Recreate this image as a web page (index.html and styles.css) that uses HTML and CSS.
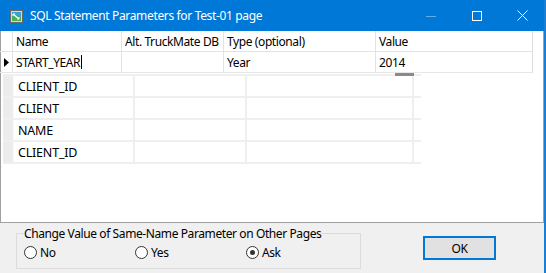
FILE: index.html
```html
<!DOCTYPE html>
<html>
<head>
<meta charset="utf-8">
<link rel="stylesheet" href="styles.css">
</head>
<body>
<div class="window">
  <div class="titlebar">
    <svg class="app-icon" width="13" height="13" viewBox="0 0 13 13">
      <rect x="0.5" y="0.5" width="12" height="12" fill="#d8d8d8" stroke="#6a6a6a"/>
      <rect x="2" y="2" width="9" height="9" fill="#3aa0d8"/>
      <polygon points="2,11 2,7 6,4 11,8 11,11" fill="#4caf50"/>
      <path d="M3 4 L9 9" stroke="#ffffff" stroke-width="1.2"/>
      <path d="M3 4 L3 6 M3 4 L5 4 M9 9 L9 7 M9 9 L7 9" stroke="#ffffff" stroke-width="1"/>
    </svg>
    <span class="title">SQL Statement Parameters for Test-01 page</span>
    <div class="controls">
      <span class="ctl ctl-min"><svg width="10" height="10" viewBox="0 0 10 10"><path d="M0 5.5 H10" stroke="#66aee8" stroke-width="1"/></svg></span>
      <span class="ctl ctl-max"><svg width="10" height="10" viewBox="0 0 10 10"><rect x="0.5" y="0.5" width="9" height="9" fill="none" stroke="#fff" stroke-width="1"/></svg></span>
      <span class="ctl ctl-close"><svg width="11" height="11" viewBox="0 0 11 11"><path d="M0.5 0.5 L10.5 10.5 M10.5 0.5 L0.5 10.5" stroke="#fff" stroke-width="1"/></svg></span>
    </div>
  </div>
  <div class="client">
    <div class="grid-top">
      <div class="cell rh"></div>
      <div class="cell">Name</div>
      <div class="cell">Alt. TruckMate DB</div>
      <div class="cell">Type (optional)</div>
      <div class="cell">Value</div>
      <div class="cell rh"><svg class="arrow" width="5" height="9" viewBox="0 0 5 9"><polygon points="0,0 5,4.5 0,9" fill="#000"/></svg></div>
      <div class="cell">START_YEAR<span class="caret"></span></div>
      <div class="cell"></div>
      <div class="cell">Year</div>
      <div class="cell">2014</div>
    </div>
    <div class="grid-low">
      <div class="lrow">
        <div class="lcell lrh"></div><div class="lcell">CLIENT_ID</div><div class="lcell"></div><div class="lcell"></div><div class="ltail"></div>
        <span class="mark"></span>
      </div>
      <div class="lrow">
        <div class="lcell lrh"></div><div class="lcell">CLIENT</div><div class="lcell"></div><div class="lcell"></div><div class="ltail"></div>
      </div>
      <div class="lrow">
        <div class="lcell lrh"></div><div class="lcell">NAME</div><div class="lcell"></div><div class="lcell"></div><div class="ltail"></div>
      </div>
      <div class="lrow">
        <div class="lcell lrh"></div><div class="lcell">CLIENT_ID</div><div class="lcell"></div><div class="lcell"></div><div class="ltail"></div>
      </div>
      <div class="lend"></div>
    </div>
  </div>
  <div class="footer">
    <fieldset class="group">
      <legend>Change Value of Same-Name Parameter on Other Pages</legend>
      <div class="radios">
        <label class="radio"><span class="circle"></span>No</label>
        <label class="radio"><span class="circle"></span>Yes</label>
        <label class="radio"><span class="circle on"></span>Ask</label>
      </div>
    </fieldset>
    <div class="ok">OK</div>
  </div>
</div>
</body>
</html>
```

FILE: styles.css
```css
* { box-sizing: border-box; }
html, body { margin: 0; padding: 0; }
body {
  width: 546px;
  height: 273px;
  overflow: hidden;
  font-family: "Noto Sans", "Open Sans", sans-serif;
  font-size: 12px;
  letter-spacing: -0.4px;
  color: #000;
  background: #f0f0f0;
}
.window {
  width: 546px;
  height: 273px;
  border-right: 2px solid #1a7fd4;
  background: #f0f0f0;
  display: flex;
  flex-direction: column;
}
.titlebar {
  height: 31px;
  flex: none;
  background: #0078d7;
  color: #fff;
  display: flex;
  align-items: center;
  padding-left: 10px;
  position: relative;
}
.app-icon { margin-top: 1px; }
.title {
  margin-left: 7px;
  font-size: 12px;
  letter-spacing: -0.35px;
}
.controls {
  margin-left: auto;
  display: flex;
  height: 31px;
}
.ctl {
  width: 46px;
  display: flex;
  align-items: center;
  justify-content: center;
}
.ctl-min { width: 46px; }
.ctl-close { width: 44px; }
.client {
  height: 192px;
  flex: none;
  background: #fff;
  border-left: 1px solid #a0a0a0;
  border-right: 1px solid #a0a0a0;
  border-bottom: 1px solid #a0a0a0;
  position: relative;
}
.grid-top {
  display: grid;
  grid-template-columns: 13px 109px 102px 152px 157px;
  grid-template-rows: 21px 20px;
  width: 533px;
  margin-left: -1px;
  border-right: 1px solid #dedede;
  border-bottom: 1px solid #e6e6e6;
}
.cell {
  border-right: 1px solid #e3e3e3;
  border-bottom: 1px solid #e3e3e3;
  padding-left: 3px;
  display: flex;
  align-items: center;
  white-space: nowrap;
  overflow: hidden;
}
.cell:nth-child(5n) { border-right: none; }
.cell:nth-child(n+6) { border-bottom: none; }
.rh { padding-left: 4px; }
.caret {
  display: inline-block;
  width: 1px;
  height: 14px;
  background: #000;
  margin-left: 0.4px;
}
.grid-low {
  margin-top: 1px;
  margin-left: 2px;
  width: 418px;
  position: relative;
}
.lrow {
  display: grid;
  grid-template-columns: 11px 121px 112px 167px 7px;
  height: 22px;
  border-top: 2px solid #efefef;
  position: relative;
}
.lcell {
  border-right: 2px solid #efefef;
  padding-left: 4px;
  display: flex;
  align-items: center;
  font-size: 12.5px;
  letter-spacing: -0.2px;
  white-space: nowrap;
}
.lrh {
  background: #ececec;
  border-right: 1px solid #fafafa;
  padding: 0;
}
.lend { height: 2px; background: #efefef; }
.mark {
  position: absolute;
  left: 392px;
  top: -3px;
  width: 19px;
  height: 3px;
  background: #8a8a8a;
}
.footer {
  flex: 1;
  display: flex;
  align-items: flex-start;
  padding: 4px 0 0 16px;
}
.group {
  margin: 0;
  width: 345px;
  height: 42px;
  border: 1px solid #dcdcdc;
  padding: 0 0 0 7px;
}
.group legend {
  padding: 0;
  margin-left: 0;
  font-size: 12px;
  line-height: 13px;
}
.radios {
  display: flex;
  margin-top: 4px;
}
.radio {
  display: flex;
  align-items: center;
  width: 111px;
  font-size: 12px;
}
.circle {
  width: 13px;
  height: 13px;
  border: 1px solid #333;
  border-radius: 50%;
  background: #fff;
  margin-right: 3px;
  position: relative;
}
.circle.on::after {
  content: "";
  position: absolute;
  left: 3px;
  top: 3px;
  width: 5px;
  height: 5px;
  border-radius: 50%;
  background: #333;
}
.ok {
  margin-left: 62px;
  margin-top: 9px;
  width: 73px;
  height: 24px;
  border: 2px solid #0078d7;
  background: #e1e1e1;
  display: flex;
  align-items: center;
  justify-content: center;
  font-size: 12px;
}
```
